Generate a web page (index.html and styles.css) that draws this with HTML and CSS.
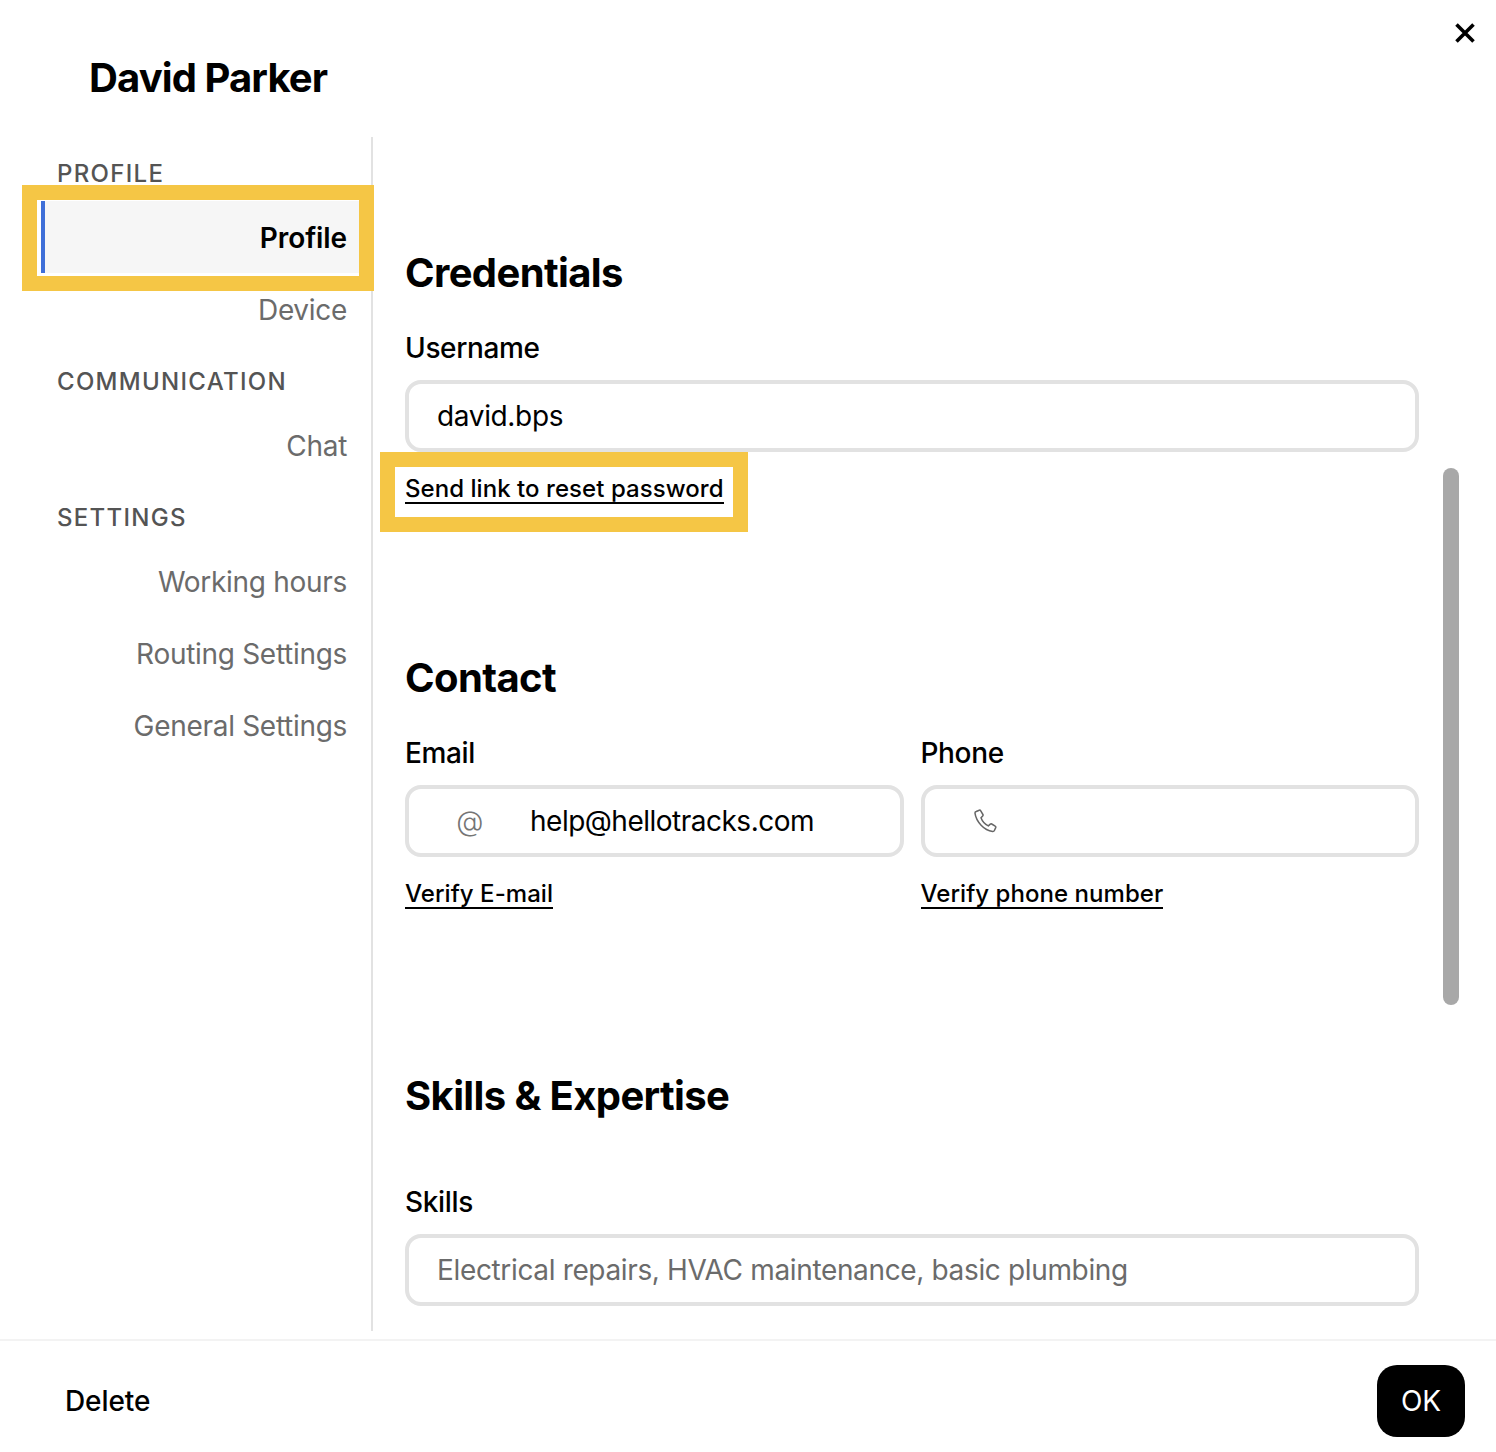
FILE: index.html
```html
<!DOCTYPE html>
<html lang="en">
<head>
<meta charset="utf-8">
<title>David Parker</title>
<link rel="stylesheet" href="styles.css">
</head>
<body>
<div class="dialog">
  <header class="head">
    <h1 class="title">David Parker</h1>
    <button class="close" aria-label="Close">
      <svg viewBox="0 0 20 20" width="20" height="20"><path d="M1.5 1.5 18.500 18.500M18.500 1.500 1.500 18.500" fill="none" stroke="#000" stroke-width="3.600"/></svg>
    </button>
  </header>
  <div class="body">
    <nav class="side">
      <div class="group">PROFILE</div>
      <a class="item active">Profile<span class="mark mark-nav"></span></a>
      <a class="item">Device</a>
      <div class="group">COMMUNICATION</div>
      <a class="item">Chat</a>
      <div class="group">SETTINGS</div>
      <a class="item">Working hours</a>
      <a class="item">Routing Settings</a>
      <a class="item">General Settings</a>
    </nav>
    <main class="main">
      <section class="sec sec-cred">
        <h2 class="h">Credentials</h2>
        <label class="lab">Username</label>
        <div class="field"><span>david.bps</span></div>
        <div class="links"><a class="link">Send link to reset password<span class="mark mark-link"></span></a></div>
      </section>
      <section class="sec sec-contact">
        <h2 class="h">Contact</h2>
        <div class="cols">
          <div class="col">
            <label class="lab">Email</label>
            <div class="field with-icon">
              <span class="ico at">@</span><span>help@hellotracks.com</span>
            </div>
            <div class="links"><a class="link">Verify E-mail</a></div>
          </div>
          <div class="col">
            <label class="lab">Phone</label>
            <div class="field with-icon">
              <span class="ico">
                <svg viewBox="0 0 24 24" width="24" height="24"><path d="M3.200 2.500 6.300 1.200c.5-.2 1-.1 1.300.4l2.300 3.900c.3.500.2 1-.2 1.400L8 8.800c1.300 3.600 3.900 6.500 7.300 8.100l2-1.800c.4-.3.900-.4 1.400-.1l3.500 2.200c.6.300.7.900.5 1.400l-1.300 2.900c-.3.700-1 1.100-1.800 1-4.200-.5-8.300-2.800-11.500-6.200C5 12.900 2.500 8.500 2 4.200c-.1-.7.400-1.400 1.200-1.700Z" fill="none" stroke="#666" stroke-width="1.500" stroke-linejoin="round"/></svg>
              </span>
            </div>
            <div class="links"><a class="link">Verify phone number</a></div>
          </div>
        </div>
      </section>
      <section class="sec sec-skills">
        <h2 class="h">Skills &amp; Expertise</h2>
        <label class="lab lab-skills">Skills</label>
        <div class="field placeholder"><span>Electrical repairs, HVAC maintenance, basic plumbing</span></div>
      </section>
      <div class="thumb"></div>
    </main>
  </div>
  <footer class="foot">
    <button class="del">Delete</button>
    <button class="ok">OK</button>
  </footer>
</div>
</body>
</html>
```
FILE: styles.css
```css
* { box-sizing: border-box; }
html, body { margin: 0; padding: 0; background: #fff; }
body { font-family: Inter, "Liberation Sans", sans-serif; color: #000; }
.dialog { width: 1496px; height: 1452px; display: flex; flex-direction: column; overflow: hidden; }

.head { height: 137px; position: relative; padding: 54px 0 0 89px; flex: none; }
.title { margin: 0; font-size: 40px; line-height: 48px; font-weight: 700; letter-spacing: -0.9px; }
.close { position: absolute; left: 1455px; top: 23px; width: 20px; height: 20px; padding: 0; border: 0; background: none; display: block; }
.close svg { display: block; }

.body { height: 1194px; display: flex; flex: none; }
.side { width: 373px; flex: none; border-right: 2px solid #e2e2e2; padding-right: 0; }
.group { height: 64px; padding: 24px 0 0 57px; font-size: 24px; line-height: 26px; font-weight: 500; letter-spacing: 1.3px; color: #545454; }
.item { display: block; height: 72px; line-height: 74px; margin-left: 41px; padding-right: 24px; text-align: right; font-size: 28px; letter-spacing: -0.3px; color: #6b6b6b; position: relative; }
.item.active { background: #f6f6f6; color: #000; font-weight: 600; letter-spacing: -0.1px; }
.item.active::before { content: ""; position: absolute; left: 0; top: 0; bottom: 0; width: 4px; background: #3f6fd8; }

.mark { position: absolute; border: 15px solid #f5c645; display: block; pointer-events: none; }
.mark-nav { left: -19px; top: -16px; width: 352px; height: 106px; z-index: 2; }
.mark-link { left: -25px; top: -22px; width: 368px; height: 80px; }

.main { flex: 1; position: relative; padding-left: 32px; overflow: hidden; }
.sec { width: 1014px; }
.sec-cred { padding-top: 112px; }
.sec-contact { padding-top: 150px; }
.sec-skills { padding-top: 163px; }
.h { margin: 0 0 33px; font-size: 40px; line-height: 48px; font-weight: 700; letter-spacing: -0.62px; }
.lab { display: block; font-size: 28px; line-height: 36px; font-weight: 500; letter-spacing: -0.35px; height: 37px; margin-bottom: 13px; }
.lab-skills { margin-top: 64px; }
.field { height: 72px; border: 4px solid #e2e2e2; border-radius: 16px; padding: 0 28px; display: flex; align-items: center; font-size: 28px; letter-spacing: -0.35px; }
.field.with-icon { padding: 0; letter-spacing: -0.5px; }
.field.placeholder { color: #6b6b6b; }
.ico { width: 121px; flex: none; display: flex; align-items: center; justify-content: center; }
.ico.at { color: #757575; font-weight: 300; }
.links { padding-top: 22px; line-height: 0; }
.link { display: inline-block; position: relative; font-size: 24px; line-height: 30px; letter-spacing: 0.05px; font-weight: 500; border-bottom: 2px solid #000; height: 30px; }
.cols { display: flex; gap: 17px; }
.col { flex: 1; }

.thumb { position: absolute; left: 1070px; top: 331px; width: 16px; height: 537px; border-radius: 8px; background: #a8a8a8; }

.foot { height: 121px; flex: none; margin-top: 8px; border-top: 2px solid #f3f3f3; display: flex; align-items: flex-start; justify-content: space-between; padding: 24px 31px 0 65px; }
.del { border: 0; background: none; padding: 0; height: 72px; font: 500 28px Inter, sans-serif; letter-spacing: -0.1px; color: #000; }
.ok { width: 88px; height: 72px; border: 0; border-radius: 20px; background: #000; color: #fff; font: 400 28px Inter, sans-serif; padding: 0; }
```
